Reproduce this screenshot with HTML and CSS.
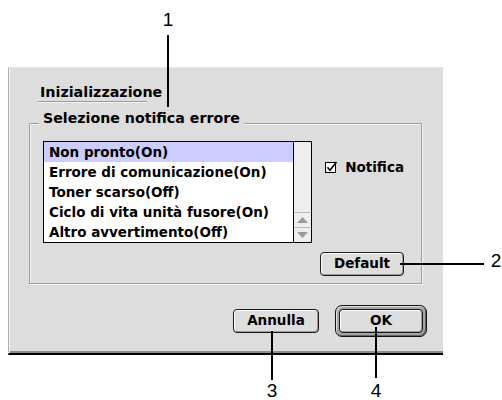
FILE: index.html
```html
<!DOCTYPE html>
<html lang="it">
<head>
<meta charset="utf-8">
<title>Inizializzazione</title>
<link rel="stylesheet" href="styles.css">
</head>
<body>
<div class="page">
  <div class="dialog">
    <div class="tab-title">Inizializzazione</div>
    <div class="tab-rule"></div>
    <div class="group">
      <div class="legend">Selezione notifica errore</div>
      <div class="group-body">
        <div class="listbox">
          <ul class="items">
            <li class="item selected">Non pronto(On)</li>
            <li class="item">Errore di comunicazione(On)</li>
            <li class="item">Toner scarso(Off)</li>
            <li class="item">Ciclo di vita unità fusore(On)</li>
            <li class="item">Altro avvertimento(Off)</li>
          </ul>
          <div class="scrollbar">
            <div class="track"></div>
            <div class="arrow">
              <svg width="11" height="6" viewBox="0 0 11 6"><polygon points="5.5,0 11,6 0,6" fill="#9a9a9a"/></svg>
            </div>
            <div class="arrow">
              <svg width="11" height="6" viewBox="0 0 11 6"><polygon points="0,0 11,0 5.5,6" fill="#9a9a9a"/></svg>
            </div>
          </div>
        </div>
        <div class="check">
          <svg class="checkbox" width="13" height="12" viewBox="0 0 13 12">
            <rect x="0.5" y="1.5" width="10" height="10" fill="#fff" stroke="#000"/>
            <path d="M2.5 6.2 L5 9.2 L11.5 1" fill="none" stroke="#000" stroke-width="1.6"/>
          </svg>
          <span>Notifica</span>
        </div>
      </div>
      <div class="group-foot">
        <div class="btn btn-default">Default</div>
      </div>
    </div>
    <div class="actions">
      <div class="btn btn-cancel">Annulla</div>
      <div class="ring">
        <div class="btn btn-ok">OK</div>
      </div>
    </div>
  </div>

  <div class="callout-line l1"></div>
  <div class="callout-num n1">1</div>
  <div class="callout-line l2"></div>
  <div class="callout-num n2">2</div>
  <div class="callout-line l3"></div>
  <div class="callout-num n3">3</div>
  <div class="callout-line l4"></div>
  <div class="callout-num n4">4</div>
</div>
</body>
</html>
```

FILE: styles.css
```css
html, body {
  margin: 0;
  padding: 0;
  background: #ffffff;
}

.page {
  position: relative;
  width: 502px;
  height: 400px;
  padding: 67px 0 0 8px;
  box-sizing: border-box;
  font-family: "DejaVu Sans", sans-serif;
  font-weight: bold;
  font-size: 13.5px;
  line-height: 16px;
  color: #000;
}

.dialog {
  width: 435px;
  box-sizing: border-box;
  background: #dddddd;
  border-top: 1px solid #e6e6e6;
  border-left: 1px solid #b0b0b0;
  border-bottom: 2px solid #000;
  box-shadow: inset 1px 0 0 #f2f2f2, inset 0 -2px 0 #8c8c8c;
  padding: 16px 16px 16px 20px;
}

.tab-title {
  margin-left: 11px;
  height: 16px;
  font-size: 14.3px;
  white-space: nowrap;
}

.tab-rule {
  margin: 1px 0 0 9px;
  width: 109px;
  height: 0;
  border-top: 1px solid #9a9a9a;
  border-bottom: 1px solid #f4f4f4;
}

.group {
  margin-top: 20px;
  width: 393px;
  box-sizing: border-box;
  border: 1px solid #9c9c9c;
  box-shadow: 1px 1px 0 #f6f6f6, inset 1px 1px 0 #f6f6f6;
  padding: 0 17px 7px 13px;
}

.legend {
  display: block;
  width: fit-content;
  margin: -14px 0 0 -4px;
  padding: 0 4px;
  background: #dddddd;
  height: 16px;
  font-size: 14.2px;
  white-space: nowrap;
}

.group-body {
  display: flex;
  align-items: flex-start;
  gap: 13px;
  margin-top: 15px;
}

.listbox {
  display: flex;
  width: 275px;
  height: 102px;
  box-sizing: border-box;
  border: 1px solid #000;
  background: #fff;
}

.items {
  list-style: none;
  margin: 0;
  padding: 0;
  flex: 1;
}

.item {
  height: 20px;
  line-height: 20px;
  padding-left: 5px;
  white-space: nowrap;
  overflow: hidden;
}

.item.selected {
  background: #ccccff;
}

.scrollbar {
  width: 17px;
  border-left: 1px solid #000;
  background: #eeeeee;
  display: flex;
  flex-direction: column;
}

.track {
  flex: 1;
}

.arrow {
  height: 14px;
  border-top: 1px solid #b8b8b8;
  display: flex;
  align-items: center;
  justify-content: center;
}

.check {
  display: flex;
  align-items: center;
  gap: 7px;
  margin-top: 18px;
}

.checkbox {
  display: block;
}

.group-foot {
  display: flex;
  justify-content: flex-end;
  margin-top: 9px;
}

.btn {
  height: 24px;
  box-sizing: border-box;
  border: 1px solid #1a1a1a;
  border-radius: 4px;
  background: #dedede;
  box-shadow: inset 1px 1px 0 #ffffff, inset -1px -1px 0 #9a9a9a;
  text-align: center;
  line-height: 21px;
}

.btn-default {
  width: 84px;
}

.actions {
  display: flex;
  justify-content: flex-end;
  align-items: center;
  gap: 16px;
  margin-top: 21px;
}

.btn-cancel {
  width: 86px;
}

.ring {
  border: 1px solid #111;
  border-radius: 7px;
  padding: 3px;
  background: #a4a4a4;
  box-shadow: inset 1px 1px 0 #e0e0e0, inset -1px -1px 0 #666;
}

.btn-ok {
  width: 84px;
}

.callout-line {
  position: absolute;
  background: #000;
}

.l1 { left: 167px; top: 35px; width: 2px; height: 72px; }
.l2 { left: 400px; top: 263px; width: 84px; height: 2px; }
.l3 { left: 271px; top: 331px; width: 2px; height: 49px; }
.l4 { left: 375px; top: 327px; width: 2px; height: 51px; }

.callout-num {
  position: absolute;
  width: 20px;
  text-align: center;
  font-family: "Liberation Sans", Arial, sans-serif;
  font-weight: normal;
  font-size: 19px;
  line-height: 19px;
}

.n1 { left: 158px; top: 10px; }
.n2 { left: 486px; top: 251px; }
.n3 { left: 262px; top: 381px; }
.n4 { left: 366px; top: 381px; }
```
